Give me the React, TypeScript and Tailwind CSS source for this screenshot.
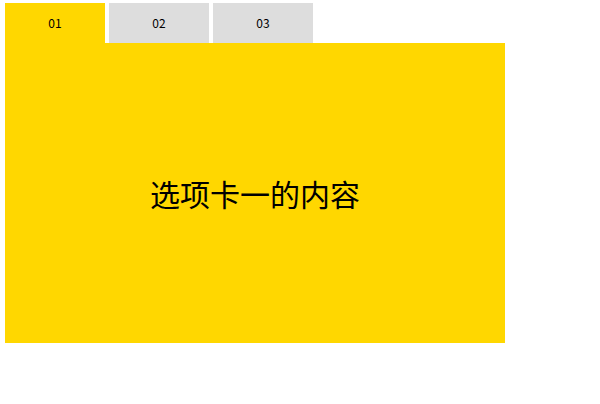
import React, { useState } from "react";

export default function App() {
  const [active, setActive] = useState(0);
  const tabs = ["01", "02", "03"];
  const contents = ["选项卡一的内容", "选项卡二的内容", "选项卡三的内容"];
  return (
    <div className="pl-[5px] pt-[3px] bg-white w-[600px] h-[404px]" style={{ fontFamily: '"Noto Sans CJK SC", sans-serif' }}>
      <div className="flex gap-[4px]">
        {tabs.map((t, i) => (
          <button
            key={t}
            onClick={() => setActive(i)}
            className={`w-[100px] h-[40px] flex items-center justify-center text-[12px] text-black ${i === active ? "bg-[#ffd700]" : "bg-[#dddddd]"}`}
          >
            {t}
          </button>
        ))}
      </div>
      <div className="w-[500px] h-[300px] bg-[#ffd700] flex items-center justify-center">
        <span className="text-[30px] text-black">{contents[active]}</span>
      </div>
    </div>
  );
}
